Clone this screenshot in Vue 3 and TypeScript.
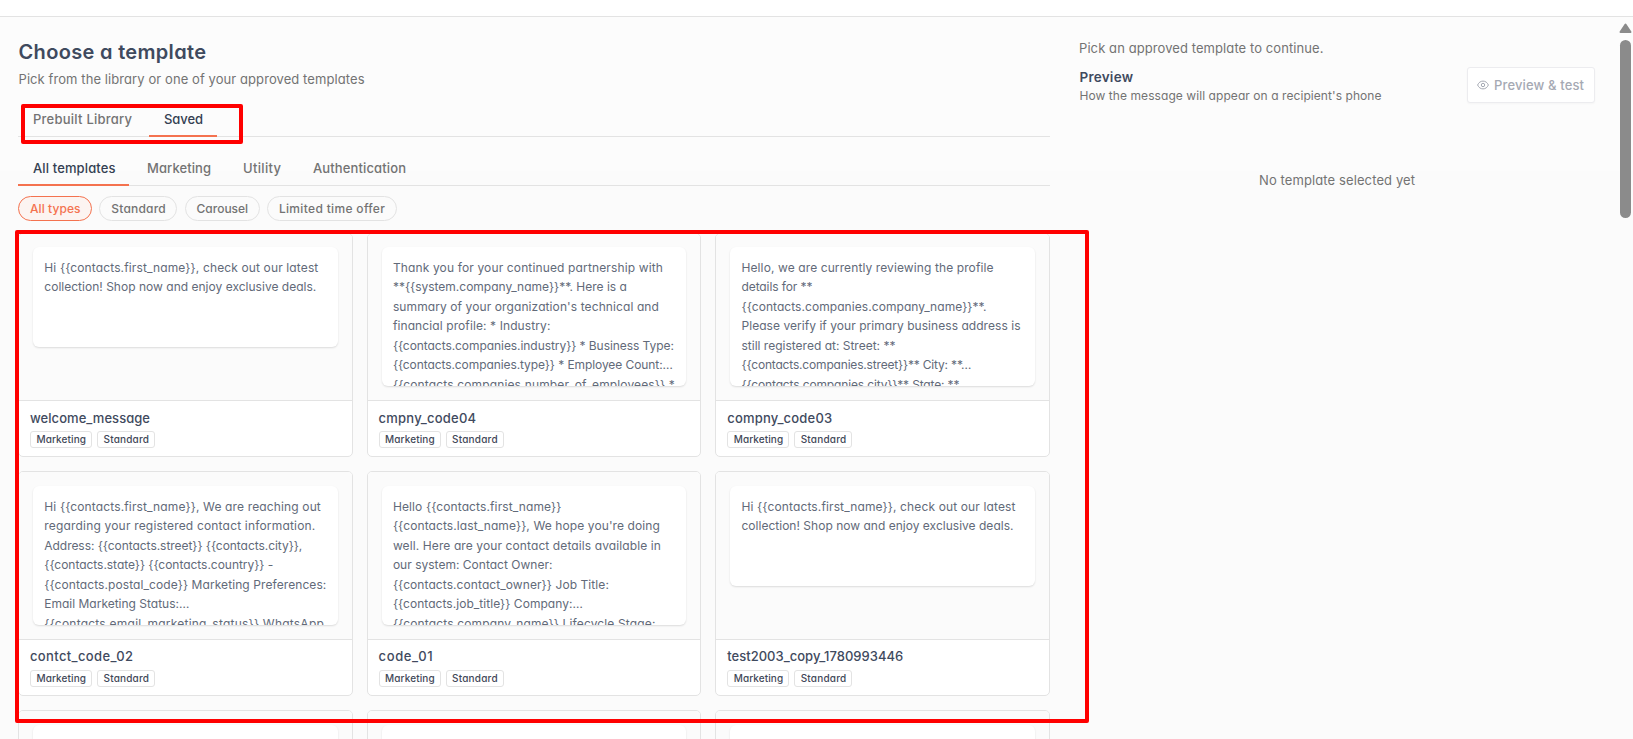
<script setup lang="ts">
import type { Directive } from 'vue'

type Line = [text: string, width: number]
interface Template {
  name: Line
  lines: Line[]
}

// Spreads a label's letters so that it takes the given width.
const vFit: Directive<HTMLElement, number> = {
  mounted(el, { value }) {
    const count = (el.textContent ?? '').length
    if (count < 2) return
    const natural = el.getBoundingClientRect().width
    el.style.letterSpacing = `${(value - natural) / (count - 1)}px`
  },
}

const mainTabs = [
  { label: 'Prebuilt Library', width: 99, box: 128, active: false },
  { label: 'Saved', width: 39, box: 68, active: true },
]
const categoryTabs = [
  { label: 'All templates', width: 82.5, box: 111, active: true },
  { label: 'Marketing', width: 64, box: 93, active: false },
  { label: 'Utility', width: 38, box: 67, active: false },
  { label: 'Authentication', width: 93, box: 122, active: false },
]
const types = [
  { label: 'All types', width: 50.5, box: 74, active: true },
  { label: 'Standard', width: 54.5, box: 78, active: false },
  { label: 'Carousel', width: 51.5, box: 75, active: false },
  { label: 'Limited time offer', width: 106, box: 130, active: false },
]
const tags = [
  { label: 'Marketing', width: 49.5, box: 62 },
  { label: 'Standard', width: 45.5, box: 58 },
]

const welcome: Line[] = [
  ['Hi {{contacts.first_name}}, check out our latest', 274],
  ['collection! Shop now and enjoy exclusive deals.', 272],
]
const templates: Template[] = [
  { name: ['welcome_message', 120], lines: welcome },
  {
    name: ['cmpny_code04', 97.5],
    lines: [
      ['Thank you for your continued partnership with', 270],
      ['**{{system.company_name}}**. Here is a', 234],
      ["summary of your organization's technical and", 266],
      ['financial profile: * Industry:', 157.5],
      ['{{contacts.companies.industry}} * Business Type:', 281],
      ['{{contacts.companies.type}} * Employee Count:…', 280],
      ['{{contacts.companies.number_of_employees}} *', 282],
    ],
  },
  {
    name: ['compny_code03', 105],
    lines: [
      ['Hello, we are currently reviewing the profile', 252],
      ['details for **', 71],
      ['{{contacts.companies.company_name}}**.', 245],
      ['Please verify if your primary business address is', 279],
      ['still registered at: Street: **', 154],
      ['{{contacts.companies.street}}** City: **…', 230],
      ['{{contacts.companies.city}}** State: **', 218],
    ],
  },
  {
    name: ['contct_code_02', 103],
    lines: [
      ['Hi {{contacts.first_name}}, We are reaching out', 276.5],
      ['regarding your registered contact information.', 271],
      ['Address: {{contacts.street}} {{contacts.city}},', 258],
      ['{{contacts.state}} {{contacts.country}} -', 229],
      ['{{contacts.postal_code}} Marketing Preferences:', 282],
      ['Email Marketing Status:…', 145],
      ['{{contacts.email_marketing_status}} WhatsApp', 279.5],
    ],
  },
  {
    name: ['code_01', 54],
    lines: [
      ['Hello {{contacts.first_name}}', 168.5],
      ["{{contacts.last_name}}, We hope you're doing", 267],
      ['well. Here are your contact details available in', 268],
      ['our system: Contact Owner:', 159.5],
      ['{{contacts.contact_owner}} Job Title:', 216],
      ['{{contacts.job_title}} Company:…', 190],
      ['{{contacts.company_name}} Lifecycle Stage:', 262.5],
    ],
  },
  { name: ['test2003_copy_1780993446', 176], lines: welcome },
]
</script>

<template>
  <div class="app">
    <header class="topbar"></header>
    <div class="body">
      <main class="library">
        <h1><span v-fit="187.5">Choose a template</span></h1>
        <p class="subtitle"><span v-fit="346">Pick from the library or one of your approved templates</span></p>
        <nav class="tabs main-tabs">
          <button v-for="t in mainTabs" :key="t.label" class="tab" :class="{ active: t.active }" :style="{ width: t.box + 'px' }">
            <span v-fit="t.width">{{ t.label }}</span>
          </button>
        </nav>
        <nav class="tabs category-tabs">
          <button v-for="t in categoryTabs" :key="t.label" class="tab" :class="{ active: t.active }" :style="{ width: t.box + 'px' }">
            <span v-fit="t.width">{{ t.label }}</span>
          </button>
        </nav>
        <div class="chips">
          <button v-for="t in types" :key="t.label" class="chip" :class="{ active: t.active }" :style="{ width: t.box + 'px' }">
            <span v-fit="t.width">{{ t.label }}</span>
          </button>
        </div>
        <section class="grid">
          <article v-for="t in templates" :key="t.name[0]" class="card">
            <div class="preview">
              <div class="bubble">
                <div v-for="line in t.lines" :key="line[0]" class="line"><span v-fit="line[1]">{{ line[0] }}</span></div>
              </div>
            </div>
            <div class="meta">
              <div class="name"><span v-fit="t.name[1]">{{ t.name[0] }}</span></div>
              <div class="tags">
                <span v-for="tag in tags" :key="tag.label" class="tag" :style="{ width: tag.box + 'px' }">
                  <span v-fit="tag.width">{{ tag.label }}</span>
                </span>
              </div>
            </div>
          </article>
          <article v-for="n in 3" :key="n" class="card">
            <div class="preview"><div class="bubble"></div></div>
            <div class="meta"></div>
          </article>
        </section>
      </main>
      <aside class="side">
        <p class="hint"><span v-fit="244.5">Pick an approved template to continue.</span></p>
        <div class="side-head">
          <div>
            <h2><span v-fit="53.5">Preview</span></h2>
            <p class="how"><span v-fit="302">How the message will appear on a recipient's phone</span></p>
          </div>
          <button class="test">
            <svg width="12" height="10" viewBox="0 0 12 10" fill="none" stroke="currentColor">
              <path d="M.6 5C1.7 2.500 3.700 1.100 6 1.100S10.300 2.500 11.400 5C10.300 7.500 8.300 8.900 6 8.900S1.700 7.500.6 5Z" />
              <circle cx="6" cy="5" r="1.700" />
            </svg>
            <span v-fit="90">Preview &amp; test</span>
          </button>
        </div>
        <p class="empty"><span v-fit="156">No template selected yet</span></p>
      </aside>
      <div class="scrollbar">
        <svg width="13" height="11" viewBox="0 0 13 11"><path d="M6.500 1.500 11.500 9H1.500Z" fill="#8b8b8b" stroke="#8b8b8b" stroke-width="2" stroke-linejoin="round" /></svg>
        <div class="thumb"></div>
      </div>
    </div>
    <div class="mark mark-tabs"></div>
    <div class="mark mark-cards"></div>
  </div>
</template>

<style>
body { margin: 0; overflow: hidden; }
</style>

<style scoped>
* { box-sizing: border-box; }
.app {
  position: relative;
  width: 1633px;
  height: 739px;
  overflow: hidden;
  background: #fff;
  color: #737373;
  font-family: Inter, "Noto Sans", sans-serif;
  font-feature-settings: "cv11" 1, "calt" 0;
  font-size: 13px;
}
h1, h2, p { margin: 0; }
span { display: inline-block; white-space: pre; }
button { font: inherit; color: inherit; background: none; border: 0; padding: 0; font-feature-settings: inherit; }
.topbar { height: 17px; border-bottom: 1px solid #e3e3e3; }
.body {
  display: flex;
  height: 722px;
  background: linear-gradient(#fcfcfc 154px, #fbfbfb 154px);
}
.library { width: 1032px; margin-left: 18px; flex: none; }
h1 { margin-top: 20px; height: 30px; line-height: 30px; padding-left: 0.500px; font-size: 20px; font-weight: 600; color: #3f4a5e; }
.subtitle { height: 20px; line-height: 20px; margin-top: 2px; padding-left: 0.500px; }
.tabs { display: flex; border-bottom: 1px solid #e3e3e3; font-weight: 500; }
.tab { display: flex; align-items: flex-start; flex: none; height: 28px; padding-left: 15px; line-height: 20px; position: relative; }
.tab + .tab { margin-left: 3px; }
.main-tabs { margin-top: 20px; height: 28px; }
.main-tabs .tab + .tab { padding-left: 15px; }
.category-tabs { margin-top: 21px; height: 28px; }
.category-tabs .tab + .tab { padding-left: 15px; }
.tab.active { color: #343f52; }
.tab.active::after { content: ""; position: absolute; left: 0; right: 0; bottom: 0; height: 2px; background: #f4724f; }
.chips { display: flex; gap: 7.300px; margin-top: 10px; }
.chip { height: 25px; border: 1px solid #e3e3e3; border-radius: 13px; font-size: 12px; font-weight: 500; line-height: 23px; text-align: left; padding-left: 11px; }
.chip.active { color: #f4724f; border-color: #f4724f; background: #fcf4f1; }
.grid {
  display: grid;
  grid-template-columns: repeat(3, 1fr);
  grid-auto-rows: 224.200px;
  column-gap: 13.800px;
  row-gap: 14.600px;
  margin-top: 11.700px;
}
.card { border: 1px solid #e3e3e3; border-radius: 5px; background: #fff; overflow: hidden; display: flex; flex-direction: column; }
.preview { height: 167.600px; flex: none; padding: 13.600px 14px; background: #fbfbfb; border-bottom: 1px solid #e3e3e3; }
.bubble { min-height: 100px; max-height: 138.600px; overflow: hidden; background: #fff; border-radius: 6px; padding: 10.600px 11.300px; box-shadow: 0 1px 2px rgba(0, 0, 0, 0.13); color: #626a79; font-size: 12px; }
.line { height: 19.500px; line-height: 19.500px; }
.meta { padding: 6.300px 11px 0; }
.name { height: 20px; line-height: 20px; font-weight: 550; color: #3f4a5e; }
.tags { display: flex; gap: 5px; margin-top: 3.700px; }
.tag { height: 17px; border: 1px solid #e3e3e3; border-radius: 3px; padding-left: 5.500px; line-height: 15px; font-size: 10px; font-weight: 450; color: #3f4858; }
.side { margin-left: 29px; width: 516px; flex: none; }
.hint { margin-top: 21px; line-height: 20px; height: 20px; }
.side-head { display: flex; justify-content: space-between; align-items: flex-start; margin-top: 9px; padding-left: 0.500px; }
h2 { font-size: 13.500px; font-weight: 600; height: 20px; line-height: 20px; color: #3f4a5e; }
.how { font-size: 12px; height: 18px; line-height: 18px; }
.test { display: flex; align-items: center; gap: 5px; width: 128px; height: 36px; padding-left: 9px; border: 1px solid #ececef; border-radius: 3px; background: #fff; color: #a5a9b3; font-weight: 500; box-shadow: 0 1px 2px rgba(0, 0, 0, 0.03); }
.empty { margin-top: 65px; padding-left: 180px; height: 20px; line-height: 20px; }
.scrollbar { width: 14px; margin-left: 23px; padding-top: 6px; display: flex; flex-direction: column; align-items: center; }
.thumb { width: 11px; height: 178px; border-radius: 6px; background: #8b8b8b; margin-top: 6px; }
.mark { position: absolute; border: 4px solid #f00; border-radius: 2px; }
.mark-tabs { left: 20.500px; top: 103.500px; width: 222px; height: 40.500px; }
.mark-cards { left: 14.500px; top: 229.500px; width: 1074px; height: 493.500px; }
</style>
